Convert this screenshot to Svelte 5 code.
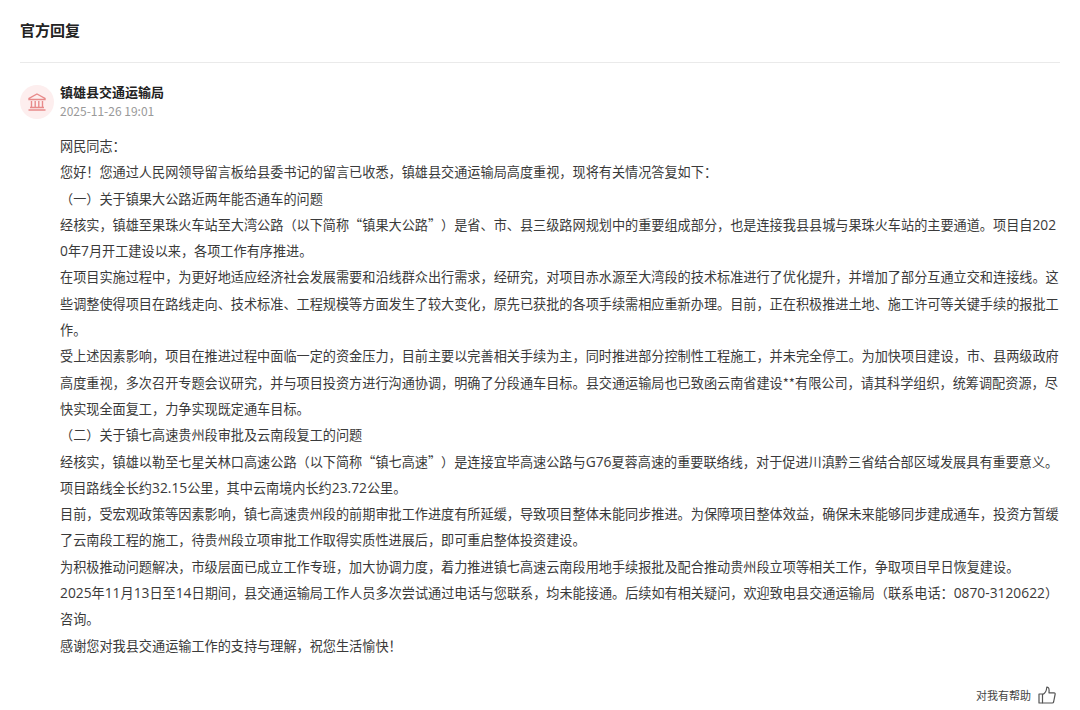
<script>
  // Reply body. Lines holding Latin runs are split where the original wraps
  const paragraphs = [
    '网民同志：',
    '您好！您通过人民网领导留言板给县委书记的留言已收悉，镇雄县交通运输局高度重视，现将有关情况答复如下：',
    '（一）关于镇果大公路近两年能否通车的问题',
    '经核实，镇雄至果珠火车站至大湾公路（以下简称“镇果大公路”）是省、市、县三级路网规划中的重要组成部分，也是连接我县县城与果珠火车站的主要通道。项目自202',
    '0年7月开工建设以来，各项工作有序推进。',
    '在项目实施过程中，为更好地适应经济社会发展需要和沿线群众出行需求，经研究，对项目赤水源至大湾段的技术标准进行了优化提升，并增加了部分互通立交和连接线。这些调整使得项目在路线走向、技术标准、工程规模等方面发生了较大变化，原先已获批的各项手续需相应重新办理。目前，正在积极推进土地、施工许可等关键手续的报批工作。',
    '受上述因素影响，项目在推进过程中面临一定的资金压力，目前主要以完善相关手续为主，同时推进部分控制性工程施工，并未完全停工。为加快项目建设，市、县两级政府高度重视，多次召开专题会议研究，并与项目投资方进行沟通协调，明确了分段通车目标。县交通运输局也已致函云南省建设**有限公司，请其科学组织，统筹调配资源，尽快实现全面复工，力争实现既定通车目标。',
    '（二）关于镇七高速贵州段审批及云南段复工的问题',
    '经核实，镇雄以勒至七星关林口高速公路（以下简称“镇七高速”）是连接宜毕高速公路与G76夏蓉高速的重要联络线，对于促进川滇黔三省结合部区域发展具有重要意义。',
    '项目路线全长约32.15公里，其中云南境内长约23.72公里。',
    '目前，受宏观政策等因素影响，镇七高速贵州段的前期审批工作进度有所延缓，导致项目整体未能同步推进。为保障项目整体效益，确保未来能够同步建成通车，投资方暂缓了云南段工程的施工，待贵州段立项审批工作取得实质性进展后，即可重启整体投资建设。',
    '为积极推动问题解决，市级层面已成立工作专班，加大协调力度，着力推进镇七高速云南段用地手续报批及配合推动贵州段立项等相关工作，争取项目早日恢复建设。',
    '2025年11月13日至14日期间，县交通运输局工作人员多次尝试通过电话与您联系，均未能接通。后续如有相关疑问，欢迎致电县交通运输局（联系电话：0870-3120622）',
    '咨询。',
    '感谢您对我县交通运输工作的支持与理解，祝您生活愉快！'
  ];

  // Latin runs sit at the odd indexes after this split
  const splitRuns = (text) => text.split(/([0-9A-Za-z.-]+)/);
</script>

<div class="panel">
  <h2 class="title">官方回复</h2>

  <div class="reply">
    <div class="author">
      <div class="avatar">
        <svg width="20" height="20" viewBox="0 0 20 20" fill="none" stroke="#e88a8a" stroke-width="1.4">
          <path d="M10 2 L18 6.500 V7.500 H2 V6.500 Z" />
          <path d="M4.500 9v6M8.200 9v6M11.800 9v6M15.500 9v6" />
          <path d="M3 15.500h14M1.500 18h17" />
        </svg>
      </div>
      <div class="meta">
        <div class="dept">镇雄县交通运输局</div>
        <div class="time">2025-11-26 19:01</div>
      </div>
    </div>

    <div class="body">
      {#each paragraphs as p}
        <p>
          {#each splitRuns(p) as run, i}{#if i % 2}<span class="latin">{run}</span>{:else}{run}{/if}{/each}
        </p>
      {/each}
    </div>
  </div>

  <div class="helpful">
    <span>对我有帮助</span>
    <svg width="18" height="18" viewBox="0 0 18 18" fill="none" stroke="#555" stroke-width="1.2" stroke-linejoin="round">
      <path d="M1 8h3.500v9H1z" />
      <path d="M4.500 8.500 C7 7.500 8.500 5 8.800 1.200 C10.800 1 11.400 2.600 11 6.800 H16 C17 6.800 17.300 7.600 17.100 8.500 L15.600 16 C15.400 16.700 15 17 14.300 17 H4.500" />
    </svg>
  </div>
</div>

<style>
  :global(body) {
    background: #fff;
  }

  .panel {
    height: 710px;
    overflow: hidden;
    padding: 0 20px;
    font-family: "Noto Sans CJK SC", "Liberation Sans", sans-serif;
    color: #3a3a3a;
    text-spacing-trim: space-all;
  }

  .title {
    margin: 0;
    height: 63px;
    box-sizing: border-box;
    padding-top: 19px;
    font-size: 15px;
    line-height: 22px;
    font-weight: 700;
    color: #222;
    border-bottom: 1px solid #eaeaea;
  }

  .reply {
    padding-top: 20px;
  }

  .author {
    display: flex;
    gap: 6px;
  }

  .avatar {
    width: 34px;
    height: 34px;
    margin-top: 2px;
    border-radius: 50%;
    background: #fdeeee;
    display: flex;
    align-items: center;
    justify-content: center;
  }

  .meta {
    display: flex;
    flex-direction: column;
  }

  .dept {
    font-size: 13px;
    line-height: 18px;
    font-weight: 700;
    color: #222;
  }

  .time {
    font-size: 12px;
    line-height: 20px;
    color: #999;
  }

  .body {
    margin-top: 12px;
    padding-left: 40px;
    font-size: 13.15px;
    line-height: 26.3px;
    word-break: break-all;
  }

  .body p {
    margin: 0;
  }

  .latin {
    font-family: "Open Sans", "Liberation Sans", sans-serif;
    font-size: 13.8px;
  }

  .helpful {
    margin-top: 27px;
    padding-right: 4px;
    display: flex;
    justify-content: flex-end;
    align-items: center;
    gap: 7px;
    font-size: 11px;
    color: #444;
  }
</style>
